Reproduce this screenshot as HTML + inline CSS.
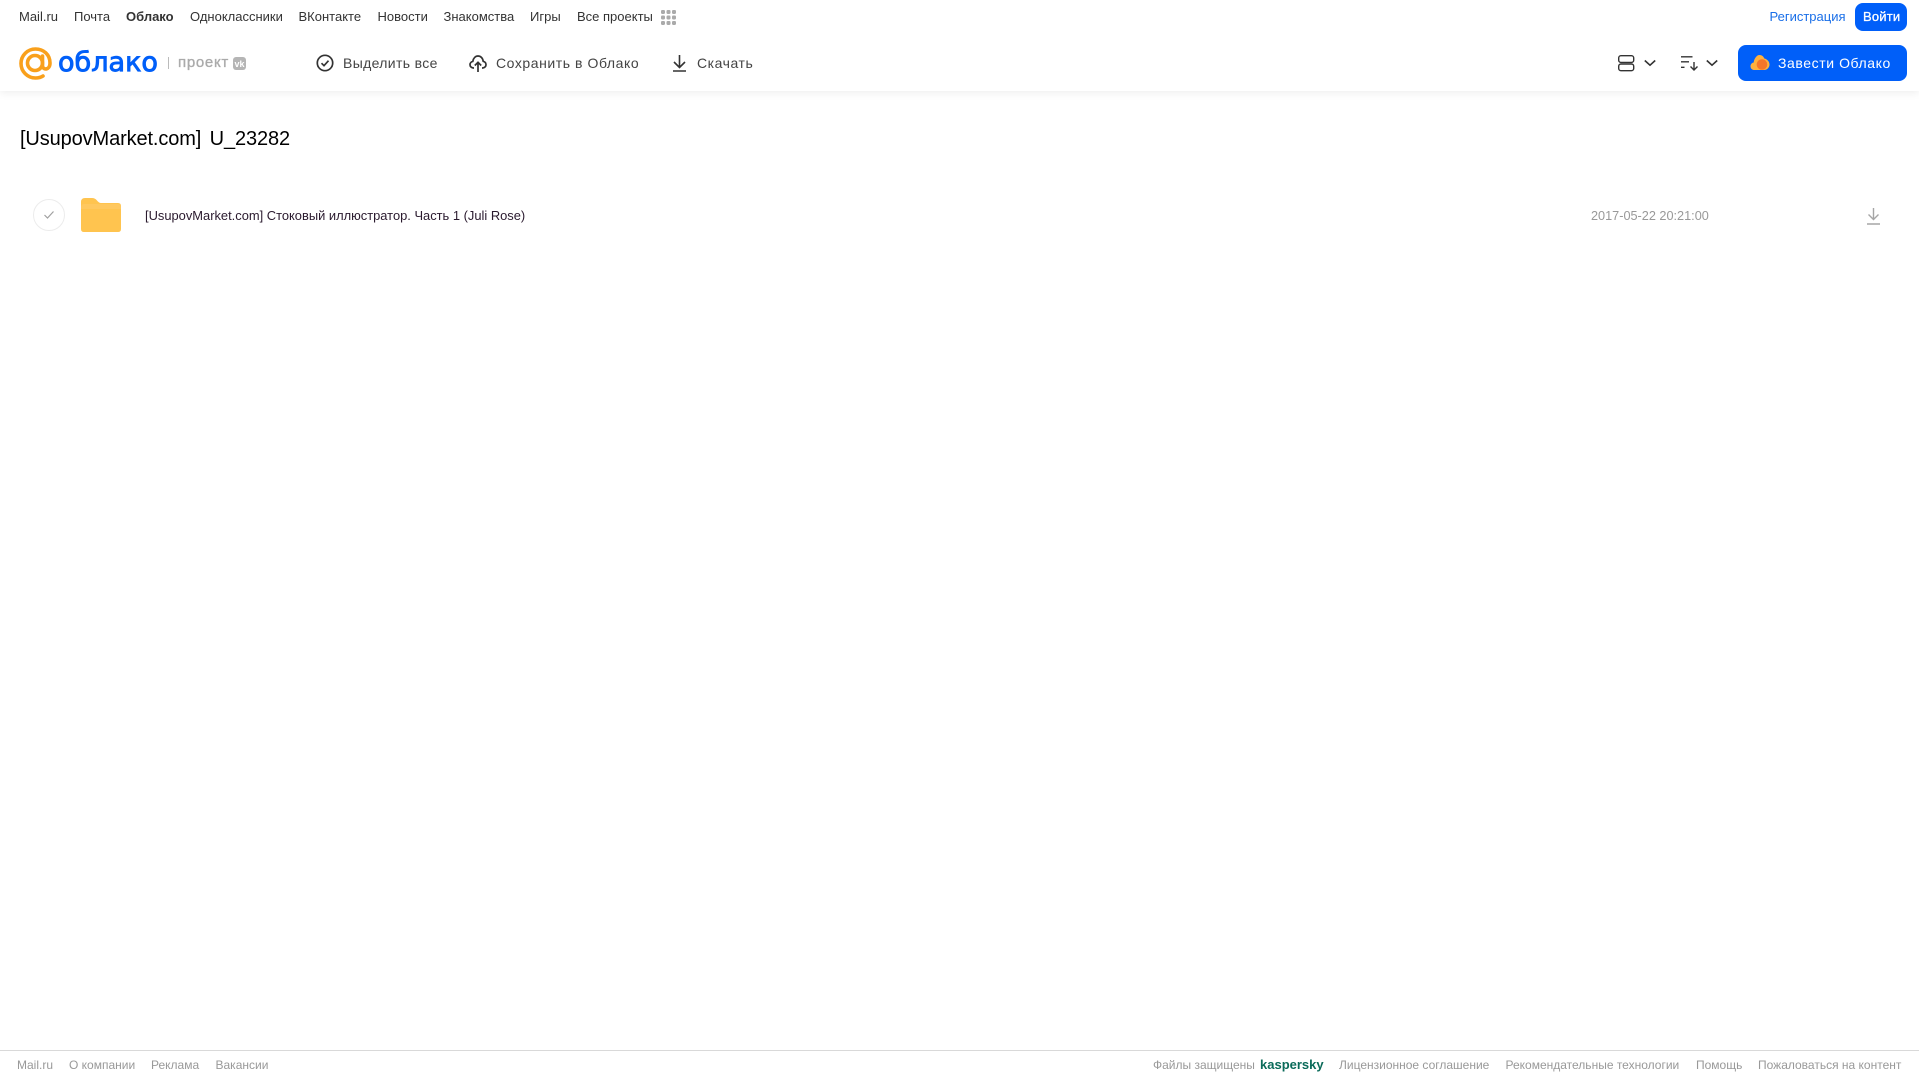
<!DOCTYPE html>
<html lang="ru"><head><meta charset="utf-8"><title>Облако</title>
<style>
html,body{margin:0;padding:0;width:1919px;height:1079px;overflow:hidden;background:#fff;font-family:"Liberation Sans",sans-serif}
.t{position:absolute;white-space:nowrap;line-height:16px}
.n{top:9px;font-size:13px;color:#333}
.b{top:55px;font-size:14px;color:#444;letter-spacing:.35px}
.f{top:1057px;font-size:12px;color:#999}
svg{position:absolute;overflow:visible}
#hd{position:absolute;left:0;top:0;width:1919px;height:91px;background:#fff;box-shadow:0 2px 8px rgba(0,0,0,.07)}
</style></head><body>
<div id="hd"></div>
<span class="t n" style="left:19px">Mail.ru</span>
<span class="t n" style="left:74px">Почта</span>
<span class="t n" style="left:126px;font-weight:700">Облако</span>
<span class="t n" style="left:190px">Одноклассники</span>
<span class="t n" style="left:298.500px">ВКонтакте</span>
<span class="t n" style="left:377.500px">Новости</span>
<span class="t n" style="left:443.500px">Знакомства</span>
<span class="t n" style="left:530px">Игры</span>
<span class="t n" style="left:577px">Все проекты</span>
<svg style="left:661px;top:10px" width="15" height="15" fill="#aaa"><rect x="0" y="0" width="4" height="4" rx="1.200"/><rect x="5.500" y="0" width="4" height="4" rx="1.200"/><rect x="11" y="0" width="4" height="4" rx="1.200"/><rect x="0" y="5.500" width="4" height="4" rx="1.200"/><rect x="5.500" y="5.500" width="4" height="4" rx="1.200"/><rect x="11" y="5.500" width="4" height="4" rx="1.200"/><rect x="0" y="11" width="4" height="4" rx="1.200"/><rect x="5.500" y="11" width="4" height="4" rx="1.200"/><rect x="11" y="11" width="4" height="4" rx="1.200"/></svg>

<svg style="left:19px;top:47px" width="33" height="33" viewBox="0 0 33 33" fill="none" stroke="#f9a01b" stroke-width="3.600"><circle cx="16" cy="16" r="7.500"/><path d="M23.500 9v9.500c0 5 7.500 5 7.500-2.500C31 7.500 24.500 2 16.500 2 8.500 2 2 8.500 2 16.500S8.500 31 16.500 31c3 0 5.500-.7 7.500-2" stroke-linecap="round"/></svg>
<svg style="left:58px;top:44px" width="105" height="36"><text x="0" y="27" font-family="DejaVu Sans" font-size="27" fill="#005ff9" stroke="#005ff9" stroke-width=".9" textLength="100" lengthAdjust="spacingAndGlyphs">облако</text></svg>
<div style="position:absolute;left:168px;top:57px;width:1px;height:12px;background:#bbb"></div>
<span class="t" style="left:178px;top:55px;font-size:15px;color:#aaa;letter-spacing:.7px;-webkit-text-stroke:.35px #aaa">проект</span>
<div style="position:absolute;left:233px;top:57px;width:13px;height:13px;background:#b5b5b5;border-radius:3px"></div>
<span class="t" style="left:234.500px;top:55.500px;font-size:9px;font-weight:700;color:#fff">vk</span>

<svg style="left:316px;top:54px" width="18" height="18" fill="none" stroke="#333" stroke-width="1.700"><circle cx="9" cy="9" r="7.700"/><path d="M5.500 9.200l2.500 2.500 4.500-5"/></svg>
<span class="t b" style="left:343px">Выделить все</span>
<svg style="left:469px;top:54px" width="18" height="18" fill="none" stroke="#333" stroke-width="1.700"><path d="M5 14H4.500C2.500 14 1 12.500 1 10.700c0-1.700 1.200-3 2.800-3.300C4.300 4 6.500 2 9 2s4.800 2 5.200 5.300C15.800 7.700 17 9 17 10.700c0 1.800-1.500 3.300-3.500 3.300H13"/><path d="M9 18V8.500M5.800 11.500L9 8.300l3.200 3.200"/></svg>
<span class="t b" style="left:496px;letter-spacing:.56px">Сохранить в Облако</span>
<svg style="left:671.500px;top:54px" width="15" height="18" fill="none" stroke="#333" stroke-width="1.600"><path d="M7.500 1v12M2 8l5.500 5.500L13 8M1 17h13"/></svg>
<span class="t b" style="left:697px;letter-spacing:.55px">Скачать</span>

<svg style="left:1618px;top:55px" width="17" height="17" fill="none" stroke="#333" stroke-width="1.400"><rect x=".7" y=".7" width="15" height="6.700" rx="2.200"/><rect x=".7" y="9" width="15" height="6.700" rx="2.200"/></svg>
<svg style="left:1644px;top:59px" width="13" height="8" fill="none" stroke="#333" stroke-width="1.600"><path d="M.8 1.500l5.200 4.700 5.200-4.700"/></svg>
<svg style="left:1681px;top:56px" width="16" height="15" fill="none" stroke="#333" stroke-width="1.400"><path d="M0 .8h11.500M0 5.800h8M0 11.300h3.500M13 6v8M9.500 10.500L13 14l3.500-3.500"/></svg>
<svg style="left:1706px;top:59px" width="13" height="8" fill="none" stroke="#333" stroke-width="1.600"><path d="M.8 1.500l5.200 4.700 5.200-4.700"/></svg>

<span class="t" style="left:1769.500px;top:9px;font-size:13px;color:#1a6fe8">Регистрация</span>
<div style="position:absolute;left:1855px;top:3px;width:52px;height:28px;background:#005ff9;border-radius:8px"></div>
<span class="t" style="left:1863px;top:9px;font-size:13px;color:#fff;-webkit-text-stroke:.3px #fff;letter-spacing:.2px">Войти</span>
<div style="position:absolute;left:1738px;top:45px;width:169px;height:36px;background:#005ff9;border-radius:8px"></div>
<svg style="left:1750px;top:54px" width="20" height="18"><path d="M4.500 16C2 16 .5 14.300.5 12.200c0-1.900 1.400-3.400 3.200-3.700C4 5 6.500 1 9.500 1c2.500 0 4 1.500 4.800 3.500C17 5 19.500 7.500 19.500 10.500c0 3-2.300 5.500-5.500 5.500z" fill="#ffb13d"/><circle cx="12" cy="10.500" r="5.300" fill="#f5762a"/></svg>
<span class="t" style="left:1778px;top:55px;font-size:14px;color:#fff;letter-spacing:.58px">Завести Облако</span>

<span class="t" style="left:20px;top:127px;font-size:20px;line-height:24px;color:#000;word-spacing:3px;letter-spacing:-.12px">[UsupovMarket.com] U_23282</span>

<div style="position:absolute;left:33px;top:199px;width:30px;height:30px;border:1px solid #ececec;border-radius:50%"></div>
<svg style="left:43px;top:210px" width="12" height="10" fill="none" stroke="#a0a0a0" stroke-width="1.200"><path d="M1.500 5l3 3 6-6.500"/></svg>
<svg style="left:81px;top:198px" width="40" height="34"><path d="M0 4Q0 0 4 0h7q3 0 5 2.500Q18 5 20 5h17q3 0 3 3v23q0 3-3 3H3q-3 0-3-3z" fill="#ffc44f"/><path d="M0 9Q0 6 3 6h34q3 0 3 3v2H0z" fill="#ffc85f"/></svg>
<span class="t" style="left:145px;top:207.500px;font-size:12.900px;color:#2a1a2e">[UsupovMarket.com] Стоковый иллюстратор. Часть 1 (Juli Rose)</span>
<span class="t" style="left:1591px;top:207.500px;font-size:12.700px;color:#999">2017-05-22 20:21:00</span>
<svg style="left:1866px;top:207px" width="15" height="18" fill="none" stroke="#a6a6a6" stroke-width="1.400"><path d="M7.500 1v11M2.500 7.500l5 5 5-5M1 17h13"/></svg>

<div style="position:absolute;left:0;top:1050px;width:1919px;height:1px;background:#d9d9d9"></div>
<span class="t f" style="left:17px">Mail.ru</span>
<span class="t f" style="left:69px">О компании</span>
<span class="t f" style="left:151px">Реклама</span>
<span class="t f" style="left:215.500px">Вакансии</span>
<span class="t f" style="left:1153px">Файлы защищены</span>
<span class="t" style="left:1260px;top:1057px;font-size:13px;font-weight:700;color:#0b6b5a">kaspersky</span>
<span class="t f" style="left:1339px">Лицензионное соглашение</span>
<span class="t f" style="left:1505.500px">Рекомендательные технологии</span>
<span class="t f" style="left:1696px">Помощь</span>
<span class="t f" style="left:1758px">Пожаловаться на контент</span>
</body></html>
